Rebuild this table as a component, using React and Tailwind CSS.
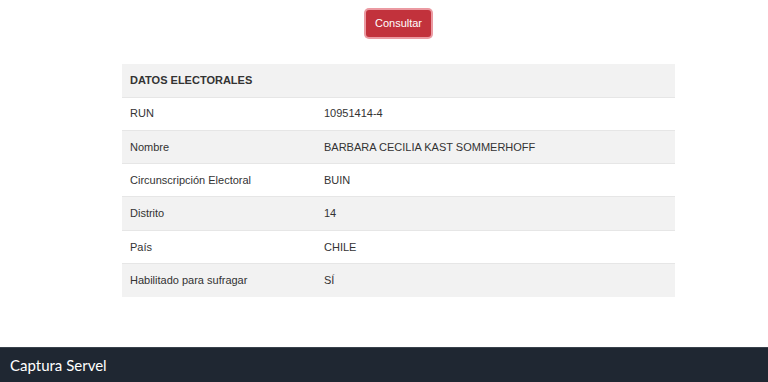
import React from 'react';

const rows = [
  ['RUN', '10951414-4'],
  ['Nombre', 'BARBARA CECILIA KAST SOMMERHOFF'],
  ['Circunscripción Electoral', 'BUIN'],
  ['Distrito', '14'],
  ['País', 'CHILE'],
  ['Habilitado para sufragar', 'SÍ'],
];

export default function App() {
  return (
    <div className="w-[768px] h-[382px] bg-white flex flex-col" style={{ fontFamily: '"Liberation Sans", Arial, sans-serif' }}>
      <div className="flex-1 flex flex-col items-center pl-[29px]">
        <div className="pt-[10px] h-[64px]">
          <button className="h-[27px] px-[9px] rounded-[3px] bg-[#c2323c] text-white text-[11px] ring-2 ring-[#eb9aa2]">
            Consultar
          </button>
        </div>
        <table className="w-[553px] text-[11px] text-[#333] border-collapse">
          <tbody>
            <tr className="bg-[#f2f2f2] h-[33px]">
              <td colSpan={2} className="px-[8px] font-bold">DATOS ELECTORALES</td>
            </tr>
            {rows.map(([k, v], i) => (
              <tr key={k} className={i % 2 === 0 ? 'bg-white h-[33.3px] border-t border-[#e6e6e6]' : 'bg-[#f2f2f2] h-[33.3px] border-t border-[#e6e6e6]'}>
                <td className="w-[202px] px-[8px]">{k}</td>
                <td className="px-0">{v}</td>
              </tr>
            ))}
          </tbody>
        </table>
      </div>
      <div className="h-[35px] bg-[#1f2732] border-t border-[#3a424c] flex items-center px-[10px] text-white text-[15px]" style={{ fontFamily: 'Lato, sans-serif' }}>
        Captura Servel
      </div>
    </div>
  );
}
